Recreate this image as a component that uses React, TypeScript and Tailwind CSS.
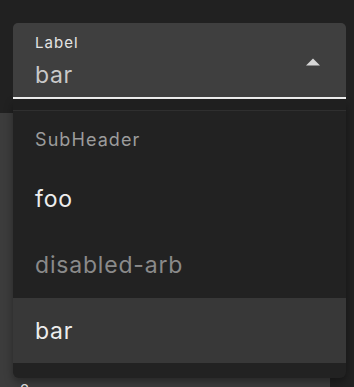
import React from "react";

export default function App() {
  const font = { fontFamily: "Inter, 'Noto Sans', sans-serif" };
  return (
    <div className="relative h-[387px] w-[354px] overflow-hidden bg-[#212121]" style={font}>
      <div className="pt-[23px] pl-[13px]">
        <div className="flex h-[76px] w-[333px] items-start rounded-t-[5px] border-b-2 border-[#f2f2f2] bg-[#3f3f3f] pl-[22px] pr-[26px] pt-[11px]">
          <div className="flex flex-1 flex-col">
            <span className="text-[15px] leading-[18px] tracking-[0.07em] text-[#e4e4e4]">Label</span>
            <span className="mt-[10px] text-[23px] leading-[26px] tracking-[0.03em] text-[#c9c9c9]">bar</span>
          </div>
          <svg width="14" height="8" viewBox="0 0 14 8" className="mt-[24px]">
            <path d="M0 7.5 L7 0.5 L14 7.5 Z" fill="#d6d6d6" />
          </svg>
        </div>
      </div>
      <div className="mt-[14px] flex h-[274px] w-[330px] items-end bg-[#3c3c3c] pl-[20px]">
        <span className="translate-y-[12px] text-[15px] leading-[18px] text-[#eeeeee]">2</span>
      </div>
      <div className="absolute left-[13px] top-[100px] flex h-[278px] w-[333px] flex-col rounded-b-[6px] bg-[#222222] shadow-[0_4px_8px_rgba(0,0,0,0.35)]">
        <div className="h-[11px] border-b border-[#2f2f2f] bg-[#1f1f1f]" />
        <div className="flex h-[56px] items-center pl-[22px] text-[18px] tracking-[0.06em] text-[#9c9c9c]">SubHeader</div>
        <div className="flex h-[65px] items-center pl-[22px] text-[23px] tracking-[0.035em] text-[#ededed]">foo</div>
        <div className="flex h-[66px] items-center pl-[22px] text-[23px] tracking-[0.035em] text-[#8a8a8a]">disabled-arb</div>
        <div className="flex h-[65px] items-center bg-[#383838] pl-[22px] pt-[2px] text-[23px] tracking-[0.035em] text-[#ededed]">bar</div>
      </div>
    </div>
  );
}
